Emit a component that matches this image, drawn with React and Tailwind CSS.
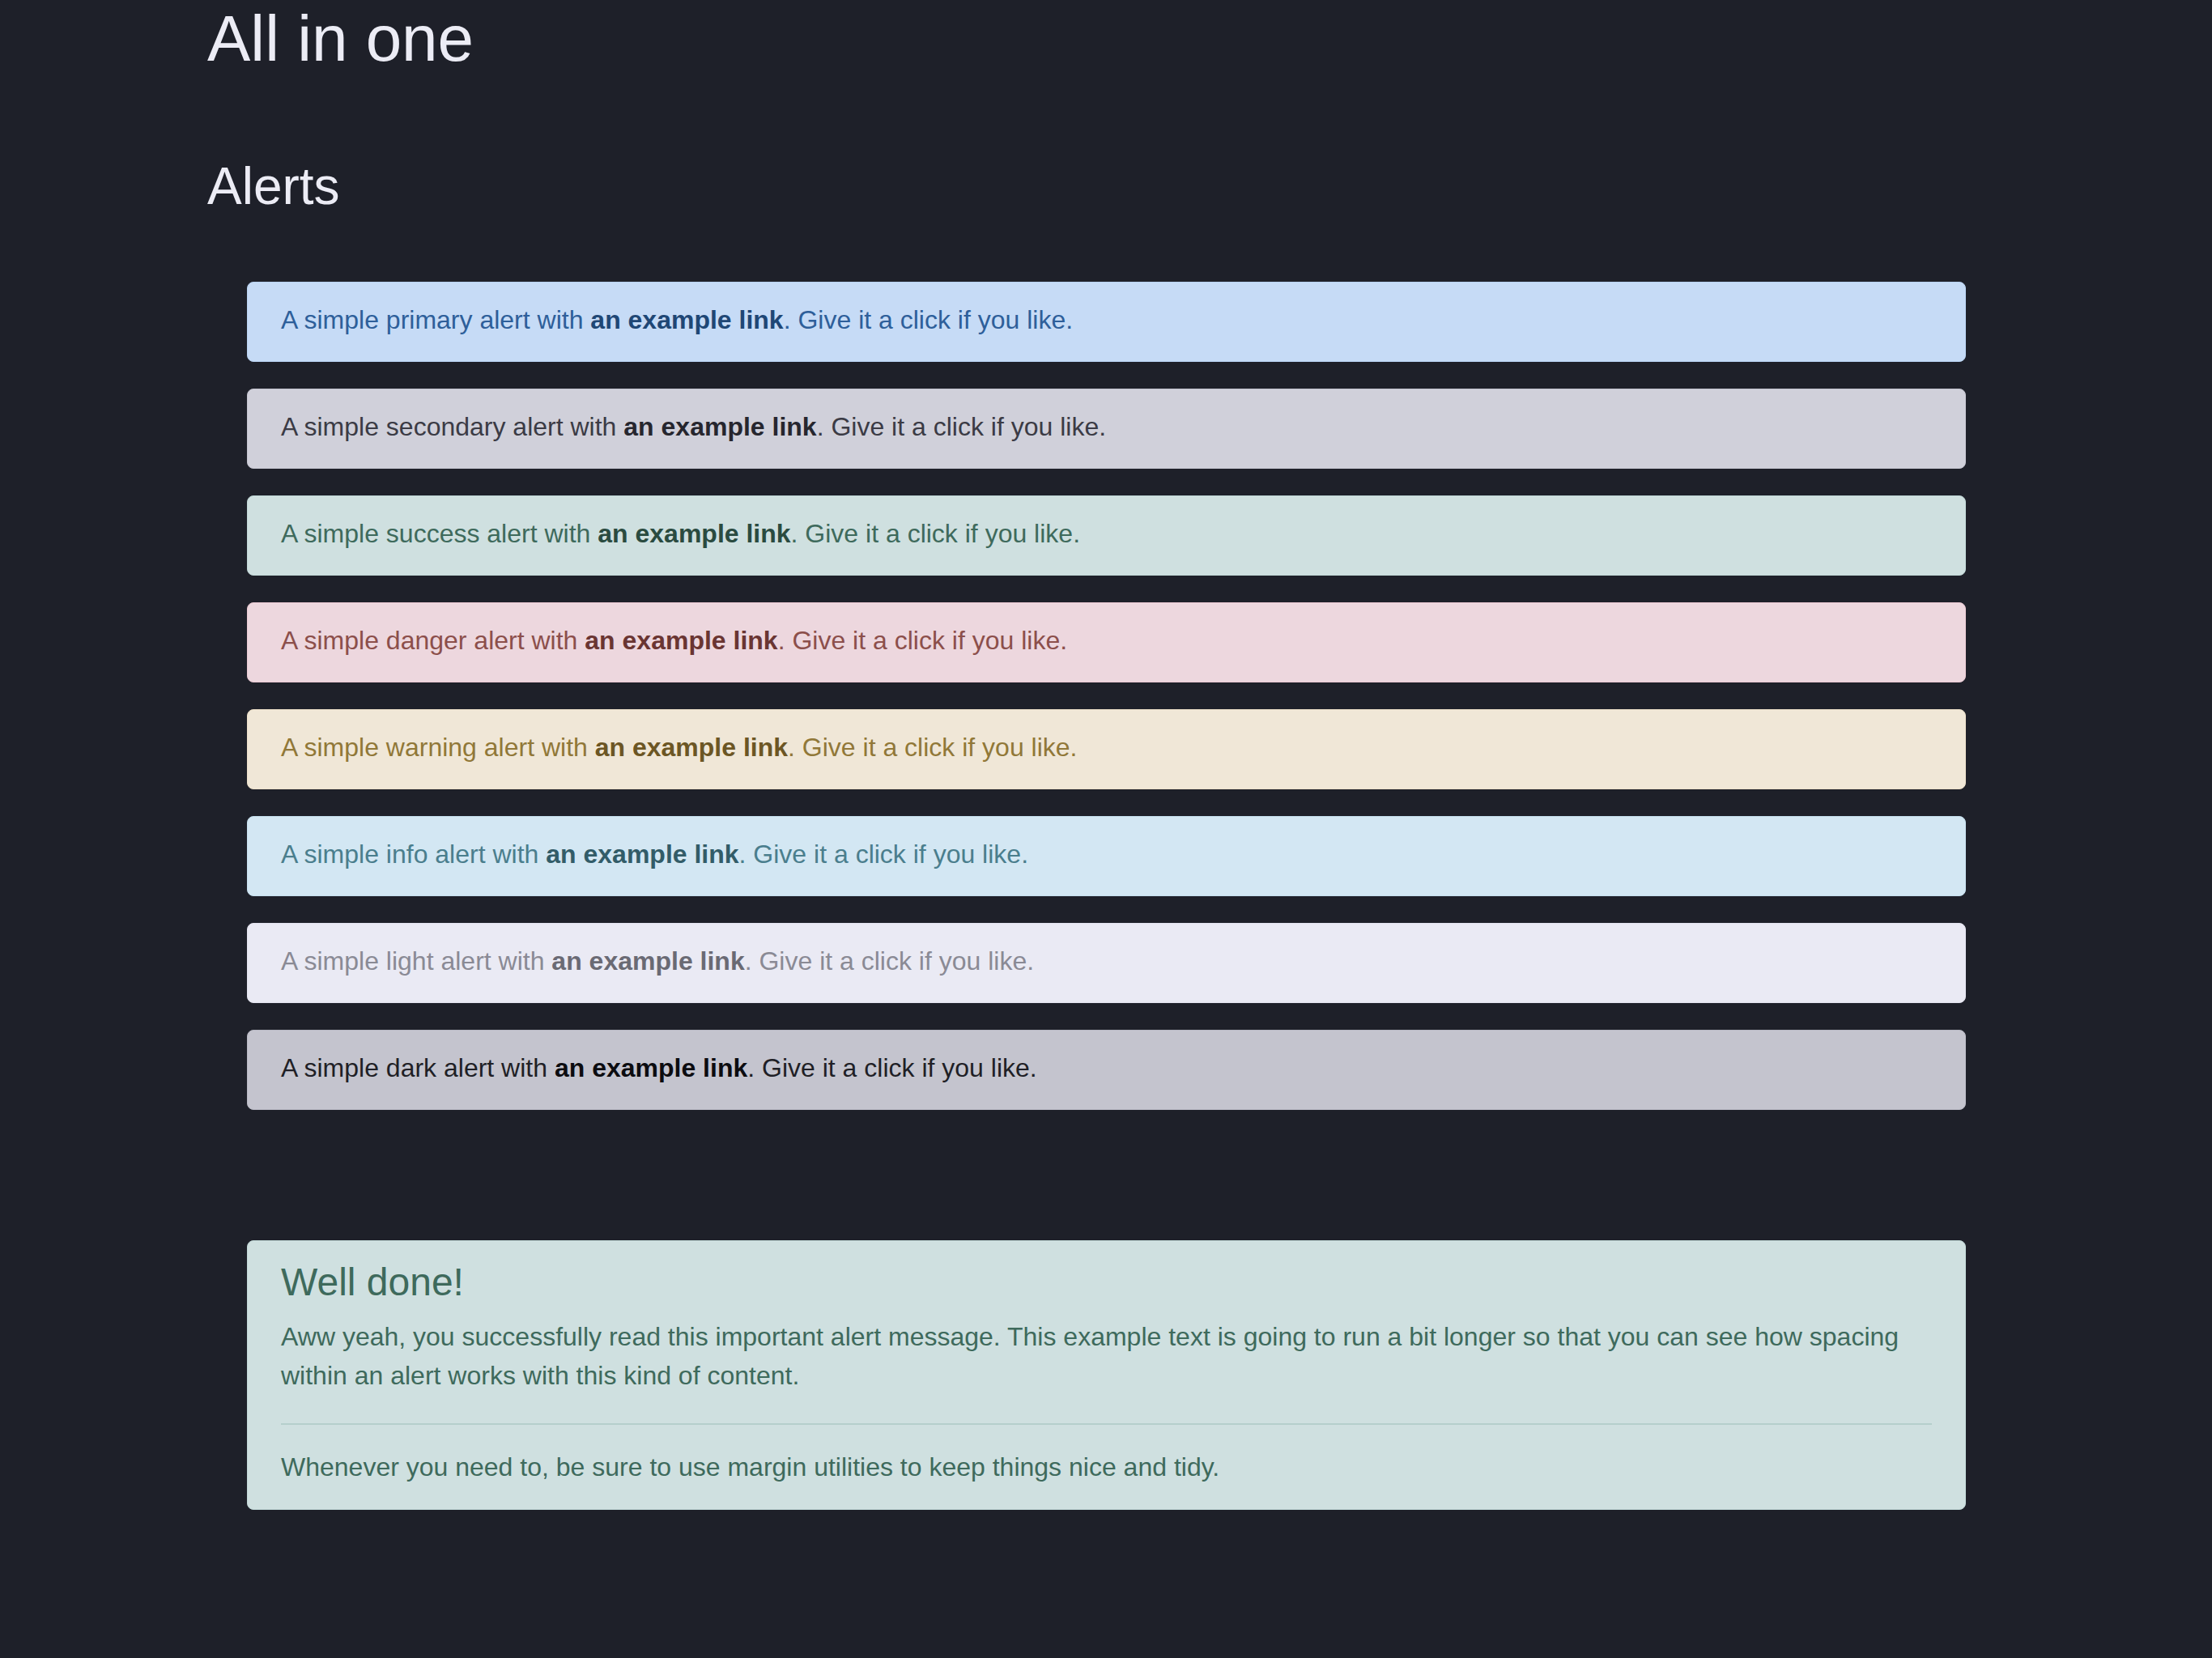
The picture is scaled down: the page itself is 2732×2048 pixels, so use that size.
import React from 'react';

const alerts = [
    { name: 'primary', box: 'bg-[#c6dbf6] border-[#b8d2f2] text-[#2e5f9a]', link: 'text-[#1f4775]' },
    { name: 'secondary', box: 'bg-[#d0d0da] border-[#c4c4cf] text-[#3b3b45]', link: 'text-[#26262e]' },
    { name: 'success', box: 'bg-[#cfe0e0] border-[#c0d7d6] text-[#3e6a5c]', link: 'text-[#2a4b40]' },
    { name: 'danger', box: 'bg-[#edd7de] border-[#eac8d2] text-[#8c4f4b]', link: 'text-[#6a3532]' },
    { name: 'warning', box: 'bg-[#f0e7d7] border-[#ecdfc8] text-[#917838]', link: 'text-[#6c5624]' },
    { name: 'info', box: 'bg-[#d3e7f3] border-[#c5dfee] text-[#4a7e8d]', link: 'text-[#325c68]' },
    { name: 'light', box: 'bg-[#eaeaf4] border-[#e2e2ee] text-[#8a8a95]', link: 'text-[#6a6a74]' },
    { name: 'dark', box: 'bg-[#c4c4ce] border-[#b8b8c3] text-[#1f1f26]', link: 'text-[#0c0c10]' },
];

export default function App() {
    return (
        <div className="min-h-[2048px] bg-[#1e2029] font-['Liberation_Sans',Arial,sans-serif]">
            <div className="pl-[256px] pr-[304px]">
                <h1 className="text-[80px] leading-[96px] text-[#ececf5]">All in one</h1>
                <h2 className="mt-[96px] text-[64px] leading-[77px] text-[#ececf5]">Alerts</h2>

                <div className="mt-[79px] ml-[49px] flex flex-col gap-[33px]">
                    {alerts.map((a) => (
                        <div
                            key={a.name}
                            className={`h-[99px] rounded-[8px] border px-[41px] pt-[22px] text-[32px] leading-[48px] ${a.box}`}
                        >
                            A simple {a.name} alert with{' '}
                            <a href="#" className={`font-bold ${a.link}`}>an example link</a>. Give it a click if you like.
                        </div>
                    ))}
                </div>

                <div className="mt-[161px] ml-[49px] rounded-[8px] border border-[#c0d7d6] bg-[#cfe0e0] px-[41px] pt-[22px] pb-[28px] text-[#3e6a5c]">
                    <h4 className="text-[48px] leading-[58px]">Well done!</h4>
                    <p className="mt-[14px] text-[32px] leading-[48px]">
                        Aww yeah, you successfully read this important alert message. This example text is going to run a bit longer so that you can see how spacing within an alert works with this kind of content.
                    </p>
                    <hr className="mt-[35px] border-t-2 border-[#b5cfcc]" />
                    <p className="mt-[28px] text-[32px] leading-[48px]">
                        Whenever you need to, be sure to use margin utilities to keep things nice and tidy.
                    </p>
                </div>
            </div>
        </div>
    );
}
